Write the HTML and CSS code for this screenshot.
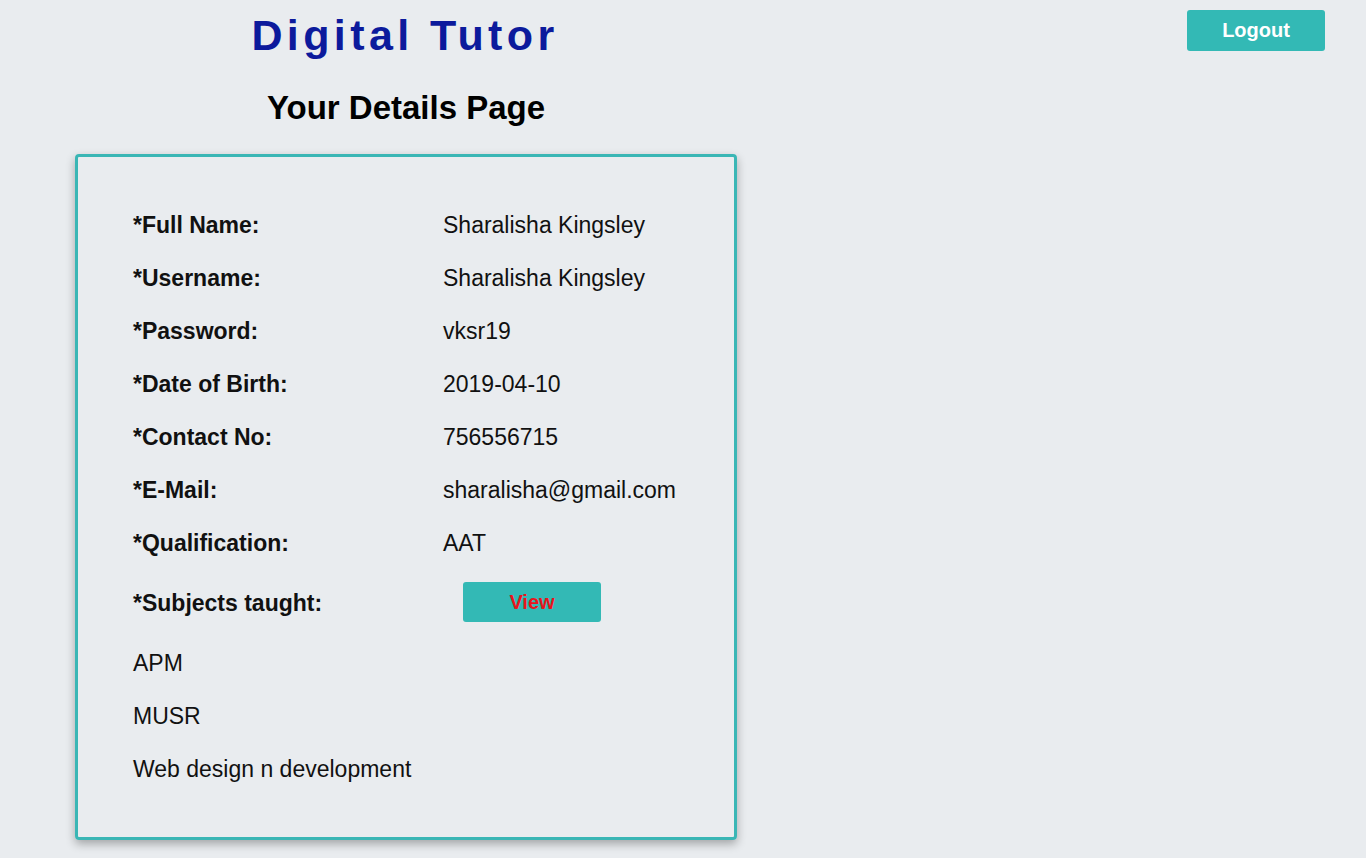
FILE: index.html
```html
<!DOCTYPE html>
<html lang="en">
<head>
<meta charset="utf-8">
<title>Digital Tutor - Your Details</title>
<link rel="stylesheet" href="styles.css">
</head>
<body>
<div class="page">
  <div class="main">
    <h1 class="brand">Digital Tutor</h1>
    <h2 class="page-title">Your Details Page</h2>
    <div class="card">
      <div class="details">
        <div class="label">*Full Name:</div><div class="value">Sharalisha Kingsley</div>
        <div class="label">*Username:</div><div class="value">Sharalisha Kingsley</div>
        <div class="label">*Password:</div><div class="value">vksr19</div>
        <div class="label">*Date of Birth:</div><div class="value">2019-04-10</div>
        <div class="label">*Contact No:</div><div class="value">756556715</div>
        <div class="label">*E-Mail:</div><div class="value">sharalisha@gmail.com</div>
        <div class="label">*Qualification:</div><div class="value">AAT</div>
        <div class="label subj">*Subjects taught:</div><div class="value subj"><button class="btn view-btn">View</button></div>
        <div class="subject">APM</div>
        <div class="subject">MUSR</div>
        <div class="subject">Web design n development</div>
      </div>
    </div>
  </div>
  <div class="side">
    <button class="btn logout-btn">Logout</button>
  </div>
</div>
</body>
</html>
```
FILE: styles.css
```css
* { box-sizing: border-box; }
html, body { margin: 0; padding: 0; }
body {
  background: #e9ecef;
  font-family: "Liberation Sans", Arial, sans-serif;
  color: #111;
}
.page {
  display: flex;
  justify-content: space-between;
  align-items: flex-start;
  padding: 0 41px 0 75px;
}
.main {
  width: 662px;
  display: flex;
  flex-direction: column;
  align-items: center;
}
.brand {
  margin: 10px 0 0 0;
  font-size: 43px;
  line-height: 50px;
  font-weight: bold;
  letter-spacing: 4.4px;
  color: #0c1a9c;
  padding-right: 2px;
}
.page-title {
  margin: 28px 0 0 0;
  font-size: 33px;
  line-height: 40px;
  font-weight: bold;
  color: #000;
}
.card {
  align-self: stretch;
  margin-top: 26px;
  margin-bottom: 19px;
  border: 3px solid #3ab6b5;
  border-radius: 4px;
  box-shadow: 0 4px 10px rgba(0, 0, 0, 0.3);
  padding: 42px 40px 41px 55px;
}
.details {
  display: grid;
  grid-template-columns: 310px 1fr;
  align-items: center;
  font-size: 23px;
  color: #111;
}
.label, .value, .subject {
  height: 53px;
  display: flex;
  align-items: center;
}
.label { font-weight: bold; color: #111; }
.label.subj, .value.subj { height: 67px; }
.value.subj { padding-bottom: 3px; }
.subject { grid-column: 1 / -1; }
.btn {
  font-family: "Liberation Sans", Arial, sans-serif;
  border: none;
  border-radius: 3px;
  background: #33b9b5;
  font-weight: bold;
  width: 138px;
  height: 40px;
  cursor: pointer;
}
.view-btn {
  margin-left: 20px;
  color: #e8141c;
  font-size: 20px;
}
.logout-btn {
  margin-top: 10px;
  height: 41px;
  color: #fff;
  font-size: 20px;
}
```
